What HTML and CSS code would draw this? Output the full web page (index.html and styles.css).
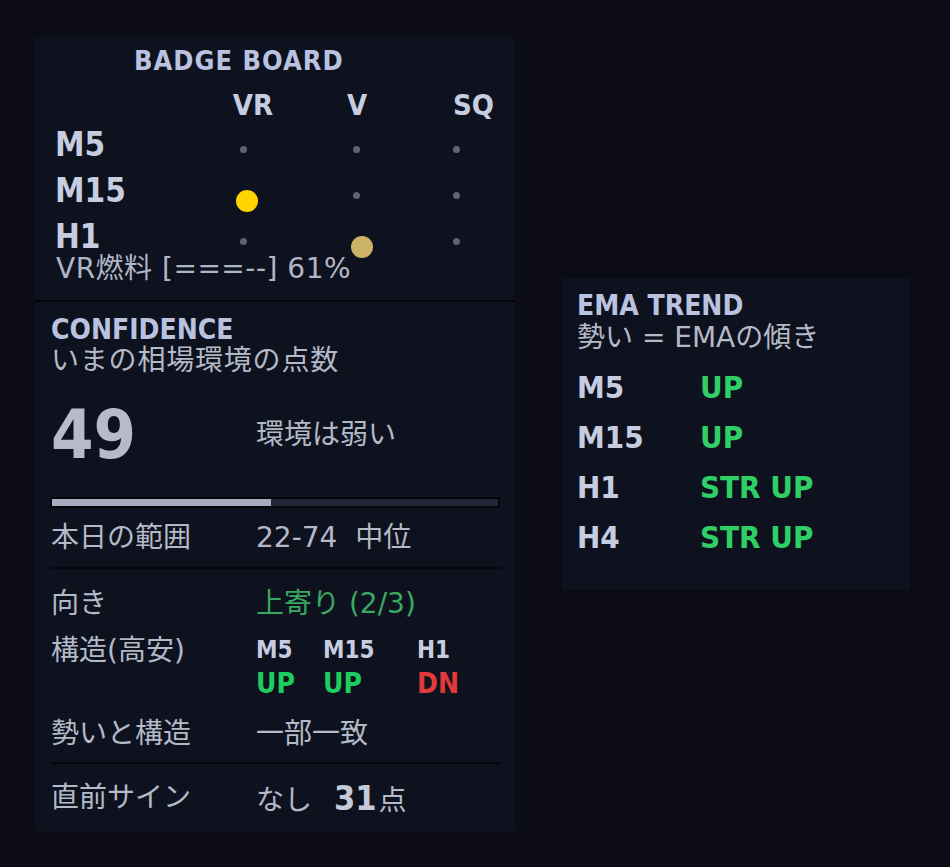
FILE: index.html
```html
<!DOCTYPE html>
<html lang="ja">
<head>
<meta charset="utf-8">
<title>Badge Board</title>
<link rel="stylesheet" href="styles.css">
</head>
<body>
<div class="page">
  <section class="panel left">
    <div class="badge">
      <div class="title badge-title">BADGE BOARD</div>
      <div class="board">
        <div class="hcell"></div>
        <div class="hcell h-vr">VR</div>
        <div class="hcell h-v">V</div>
        <div class="hcell h-sq">SQ</div>

        <div class="tf">M5</div>
        <div class="cell"><span class="dot"></span></div>
        <div class="cell"><span class="dot"></span></div>
        <div class="cell"><span class="dot"></span></div>

        <div class="tf">M15</div>
        <div class="cell"><span class="big yellow"></span></div>
        <div class="cell"><span class="dot"></span></div>
        <div class="cell"><span class="dot"></span></div>

        <div class="tf">H1</div>
        <div class="cell"><span class="dot"></span></div>
        <div class="cell"><span class="big tan"></span></div>
        <div class="cell"><span class="dot"></span></div>
      </div>
      <div class="fuel">VR燃料 [===--] 61%</div>
    </div>

    <div class="conf">
      <div class="title conf-title">CONFIDENCE</div>
      <div class="sub conf-sub">いまの相場環境の点数</div>
      <div class="score-row">
        <div class="score">49</div>
        <div class="txt">環境は弱い</div>
      </div>
      <div class="bar"><div class="fill" style="width:49%"></div></div>

      <div class="row r-range">
        <div class="lbl">本日の範囲</div>
        <div class="txt">22-74&nbsp;&nbsp;中位</div>
      </div>
      <div class="sep"></div>
      <div class="row r-dir">
        <div class="lbl">向き</div>
        <div class="txt dir">上寄り (2/3)</div>
      </div>
      <div class="row r-struct">
        <div class="lbl">構造(高安)</div>
        <div class="struct">
          <div class="s-col c1"><div class="s-tf">M5</div><div class="s-v up">UP</div></div>
          <div class="s-col c2"><div class="s-tf">M15</div><div class="s-v up">UP</div></div>
          <div class="s-col c3"><div class="s-tf">H1</div><div class="s-v dn">DN</div></div>
        </div>
      </div>
      <div class="row r-align">
        <div class="lbl">勢いと構造</div>
        <div class="txt">一部一致</div>
      </div>
      <div class="sep sep2"></div>
      <div class="row r-sign">
        <div class="lbl">直前サイン</div>
        <div class="txt sign">なし<b class="pts">31</b>点</div>
      </div>
    </div>
  </section>

  <section class="panel right">
    <div class="title ema-title">EMA TREND</div>
    <div class="sub ema-sub">勢い = EMAの傾き</div>
    <div class="ema">
      <div class="tf2">M5</div><div class="ev">UP</div>
      <div class="tf2">M15</div><div class="ev">UP</div>
      <div class="tf2">H1</div><div class="ev">STR UP</div>
      <div class="tf2">H4</div><div class="ev">STR UP</div>
    </div>
  </section>
</div>
</body>
</html>
```

FILE: styles.css
```css
html, body {
  margin: 0;
  padding: 0;
  background: #0b0c15;
}
body {
  width: 950px;
  height: 867px;
  overflow: hidden;
  font-family: "DejaVu Sans", "Noto Sans CJK JP", sans-serif;
  color: #b4b9c8;
}
.page {
  display: flex;
  align-items: flex-start;
  padding: 37px 0 0 35px;
  gap: 47px;
}
.panel {
  background: #0e121e;
}
.left {
  width: 480px;
}
.right {
  width: 333px;
  margin-top: 241px;
  padding: 14px 0 28px 15px;
}
.title, .tf, .hcell, .tf2, .ev, .score, .s-tf, .s-v, .pts {
  font-family: "DejaVu Sans Condensed", "DejaVu Sans", sans-serif;
  font-weight: bold;
}
.title {
  color: #b9c3e0;
  font-size: 28px;
  line-height: 32px;
}

/* badge board */
.badge {
  padding: 8px 0 18px 20px;
  border-bottom: 2px solid #05060a;
}
.badge-title {
  font-size: 27px;
  line-height: 32px;
  margin-left: 79px;
  letter-spacing: 1px;
}
.board {
  display: grid;
  grid-template-columns: 150px 76px 150px 50px;
  grid-template-rows: 34px 46px 46px 46px;
  margin-top: 11px;
}
.hcell {
  color: #c6cde0;
  font-size: 29px;
  line-height: 34px;
  text-align: center;
}
.h-vr { padding-left: 20px; }
.h-v { padding-left: 2px; }
.h-sq { padding-left: 22px; white-space: nowrap; }
.tf {
  color: #c6cde0;
  font-size: 33px;
  line-height: 46px;
}
.cell {
  display: flex;
  align-items: center;
  justify-content: center;
}
.dot {
  width: 7px;
  height: 7px;
  border-radius: 50%;
  background: #5f6378;
  margin-top: 8px;
}
.big {
  width: 22px;
  height: 22px;
  border-radius: 50%;
  margin-top: 19px;
}
.yellow { background: #ffd300; margin-left: 8px; }
.tan { background: #cdb266; margin-left: 12px; }
.fuel {
  font-size: 28px;
  line-height: 26px;
  margin-top: -4px;
  margin-left: 1px;
  color: #b1b6c6;
  white-space: nowrap;
  letter-spacing: 0.5px;
}

/* confidence */
.conf {
  padding: 12px 15px 15px 16px;
}
.conf-title {
  line-height: 32px;
}
.sub {
  font-size: 28px;
  line-height: 30px;
  color: #b4b9c8;
  white-space: nowrap;
}
.conf-sub {
  letter-spacing: 0.8px;
}
.score-row {
  display: flex;
  align-items: center;
  margin-top: 25px;
}
.score {
  width: 205px;
  font-size: 68px;
  line-height: 68px;
  color: #b7bac8;
}
.txt {
  font-size: 28px;
  line-height: 30px;
  white-space: nowrap;
}
.bar {
  margin-top: 28px;
  margin-left: -1px;
  width: 446px;
  height: 7px;
  border: 2px solid #05060a;
  background: #222538;
}
.fill {
  height: 100%;
  background: #a8aac0;
}
.row {
  display: flex;
  align-items: flex-start;
}
.lbl {
  width: 205px;
  font-size: 28px;
  line-height: 30px;
  white-space: nowrap;
}
.r-range { margin-top: 15px; }
.sep {
  height: 2px;
  background: #06070c;
  margin-top: 14px;
  width: 450px;
}
.sep2 { margin-top: 13px; }
.r-dir { margin-top: 20px; }
.dir { color: #3aa862; }
.r-struct { margin-top: 17px; }
.struct {
  display: flex;
  margin-top: -3px;
}
.s-col.c1 { width: 67px; }
.s-col.c2 { width: 94px; }
.s-tf {
  font-size: 24px;
  line-height: 34px;
  color: #c6cde0;
}
.s-v {
  font-size: 28px;
  line-height: 34px;
}
.up { color: #1fcc5e; }
.dn { color: #e23a3a; }
.r-align { margin-top: 18px; }
.r-sign { margin-top: 19px; }
.sign { display: flex; align-items: baseline; }
.pts {
  font-size: 34px;
  color: #c6cad8;
  margin: 0 2px 0 22px;
}

/* EMA trend */
.ema-title { line-height: 28px; }
.ema-sub { margin-top: 3px; }
.ema {
  display: grid;
  grid-template-columns: 123px auto;
  grid-auto-rows: 50px;
  margin-top: 9px;
}
.tf2 {
  font-size: 31px;
  line-height: 50px;
  color: #c6cde0;
}
.ev {
  font-size: 31px;
  line-height: 50px;
  color: #2fcf66;
  white-space: nowrap;
}
```
